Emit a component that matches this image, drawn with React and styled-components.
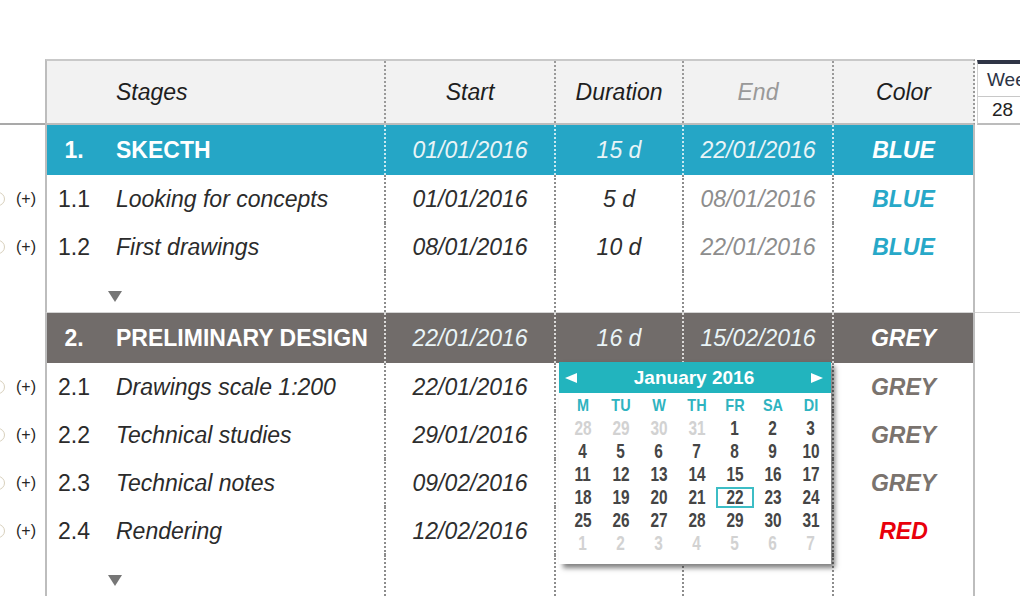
import React from "react";
import styled, { createGlobalStyle } from "styled-components";

const Global = createGlobalStyle`
  html, body { margin: 0; padding: 0; background: #fff; }
  body { font-family: "Liberation Sans", Arial, sans-serif; overflow: hidden; }
`;

const Page = styled.div`
  position: relative;
  width: 1020px;
  height: 596px;
  overflow: hidden;
  padding-top: 59px;
  box-sizing: border-box;
`;

const Row = styled.div`
  display: flex;
  height: ${(p) => p.$h}px;
`;

const Gutter = styled.div`
  width: 45px;
  flex: none;
  display: flex;
  align-items: center;
  gap: 11px;
  box-sizing: border-box;
  overflow: hidden;
  border-bottom: ${(p) => (p.$line ? "2px solid #a9a9a9" : "none")};
`;

const Ring = styled.span`
  width: 12px;
  height: 12px;
  margin-left: -9px;
  border-radius: 50%;
  border: 1px solid #d8d0bc;
  flex: none;
`;

const Plus = styled.span`
  font-size: 16px;
  color: #262626;
`;

const bgs = { head: "#f2f2f2", blue: "#25a6c6", grey: "#716c6a", task: "#fff", space: "#fff" };

const Main = styled.div`
  width: 930px;
  flex: none;
  box-sizing: border-box;
  display: grid;
  grid-template-columns: 54px 283px 170px 128px 150px 141px;
  background: ${(p) => bgs[p.$kind]};
  border-left: 2px solid #bdbdbd;
  border-right: 2px ${(p) => (p.$kind === "head" ? "dotted #9a9a9a" : "solid #bdbdbd")};
  border-top: ${(p) =>
    p.$kind === "head" ? "2px solid #c9c9c9" : p.$sep ? "1px solid #d4d4d4" : "none"};
  border-bottom: ${(p) => (p.$kind === "head" ? "2px solid #bcbcbc" : "none")};
`;

const Cell = styled.div`
  display: flex;
  align-items: center;
  justify-content: ${(p) => p.$justify || "center"};
  padding-left: ${(p) => p.$pad || 0}px;
  border-left: ${(p) => (p.$div ? `2px dotted ${p.$dot}` : "none")};
  font-size: 23px;
  font-style: ${(p) => (p.$italic ? "italic" : "normal")};
  font-weight: ${(p) => (p.$bold ? 700 : 400)};
  color: ${(p) => p.$color};
  white-space: nowrap;
  overflow: hidden;
`;

const SpaceCell = styled.div`
  padding: 20px 0 0 7px;
  border-left: ${(p) => (p.$div ? "2px dotted #8c8c8c" : "none")};
`;

const Caret = styled.div`
  width: 0;
  height: 0;
  border-left: 7px solid transparent;
  border-right: 7px solid transparent;
  border-top: 11px solid #767676;
`;

const Week = styled.div`
  flex: 1;
  background: #fff;
  border-top: ${(p) => (p.$sep ? "1px solid #d4d4d4" : "none")};
`;

const WeekHead = styled.div`
  flex: 1;
  margin-left: 2px;
  display: flex;
  flex-direction: column;
  border-top: 4px solid #2f3546;
  margin-top: 1px;
  border-left: 1px solid #d0d0d0;
  border-bottom: 2px solid #bcbcbc;
`;

const WeekLabel = styled.div`
  height: 32px;
  display: flex;
  align-items: center;
  padding-left: 9px;
  font-size: 19px;
  color: #2c3446;
  border-bottom: 1px solid #c8c8c8;
  white-space: nowrap;
`;

const WeekNum = styled.div`
  flex: 1;
  display: flex;
  align-items: center;
  padding-left: 14px;
  font-size: 19px;
  color: #222;
`;

/* date picker lying over the table */
const Picker = styled.div`
  position: absolute;
  left: 559px;
  top: 362px;
  width: 272px;
  height: 202px;
  background: #fff;
  box-shadow: 4px 4px 5px rgba(0, 0, 0, 0.5);
`;

const PickerHead = styled.div`
  height: 31px;
  background: #22b4be;
  display: flex;
  align-items: center;
  justify-content: space-between;
  padding: 0 8px 0 6px;
`;

const Arrow = styled.span`
  width: 0;
  height: 0;
  border-top: 5px solid transparent;
  border-bottom: 5px solid transparent;
  border-${(p) => (p.$dir === "left" ? "right" : "left")}: 12px solid #fff;
`;

const Title = styled.span`
  font-size: 19px;
  font-weight: 700;
  color: #fff;
`;

const DayGrid = styled.div`
  display: grid;
  grid-template-columns: repeat(7, 1fr);
  grid-auto-rows: 23px;
  padding: 1px 4px 0 5px;
`;

const Dow = styled.div`
  display: flex;
  align-items: center;
  justify-content: center;
  font-size: 17px;
  font-weight: 700;
  color: #2fb3c0;
  transform: scaleX(0.85);
`;

const Day = styled.div`
  display: flex;
  align-items: center;
  justify-content: center;
`;

const DayNum = styled.span`
  display: flex;
  align-items: center;
  justify-content: center;
  box-sizing: border-box;
  width: 38px;
  height: 21px;
  border: 2px solid ${(p) => (p.$sel ? "#3dbdc5" : "transparent")};
  font-size: 20px;
  font-weight: 700;
  color: ${(p) => (p.$muted ? "#d2d2d2" : "#454545")};
  & > span {
    display: inline-block;
    transform: scaleX(0.77);
  }
`;

const groups = [
  {
    num: "1.",
    name: "SKECTH",
    start: "01/01/2016",
    dur: "15 d",
    end: "22/01/2016",
    color: "BLUE",
    kind: "blue",
    tasks: [
      { num: "1.1", name: "Looking for concepts", start: "01/01/2016", dur: "5 d", end: "08/01/2016", color: "BLUE" },
      { num: "1.2", name: "First drawings", start: "08/01/2016", dur: "10 d", end: "22/01/2016", color: "BLUE" },
    ],
  },
  {
    num: "2.",
    name: "PRELIMINARY DESIGN",
    start: "22/01/2016",
    dur: "16 d",
    end: "15/02/2016",
    color: "GREY",
    kind: "grey",
    // duration / end of these rows sit under the open date picker
    tasks: [
      { num: "2.1", name: "Drawings scale 1:200", start: "22/01/2016", color: "GREY" },
      { num: "2.2", name: "Technical studies", start: "29/01/2016", color: "GREY" },
      { num: "2.3", name: "Technical notes", start: "09/02/2016", color: "GREY" },
      { num: "2.4", name: "Rendering", start: "12/02/2016", color: "RED" },
    ],
  },
];

const tagColors = { BLUE: "#27a8c8", GREY: "#7a736e", RED: "#e8000b" };

const weeks = [
  [28, 29, 30, 31, 1, 2, 3],
  [4, 5, 6, 7, 8, 9, 10],
  [11, 12, 13, 14, 15, 16, 17],
  [18, 19, 20, 21, 22, 23, 24],
  [25, 26, 27, 28, 29, 30, 31],
  [1, 2, 3, 4, 5, 6, 7],
];

function StageRow({ g, sep }) {
  const dot = "rgba(255,255,255,0.75)";
  return (
    <Row $h={sep ? 51 : 50}>
      <Gutter />
      <Main $kind={g.kind} $sep={sep}>
        <Cell $bold $color="#fff">{g.num}</Cell>
        <Cell $bold $justify="flex-start" $pad={15} $color="#fff">{g.name}</Cell>
        <Cell $div $dot={dot} $italic $color="#e9f4f7">{g.start}</Cell>
        <Cell $div $dot={dot} $italic $color="#e9f4f7">{g.dur}</Cell>
        <Cell $div $dot={dot} $italic $color="#e9f4f7">{g.end}</Cell>
        <Cell $div $dot={dot} $italic $bold $color="#fff">{g.color}</Cell>
      </Main>
      <Week $sep={sep} />
    </Row>
  );
}

function TaskRow({ t }) {
  const dot = "#8c8c8c";
  return (
    <Row $h={48}>
      <Gutter>
        <Ring />
        <Plus>(+)</Plus>
      </Gutter>
      <Main $kind="task">
        <Cell $color="#2b2b2b">{t.num}</Cell>
        <Cell $italic $justify="flex-start" $pad={15} $color="#2b2b2b">{t.name}</Cell>
        <Cell $div $dot={dot} $italic $color="#2e2e2e">{t.start}</Cell>
        <Cell $div $dot={dot} $italic $color="#2e2e2e">{t.dur}</Cell>
        <Cell $div $dot={dot} $italic $color="#8d8d8d">{t.end}</Cell>
        <Cell $div $dot={dot} $italic $bold $color={tagColors[t.color]}>{t.color}</Cell>
      </Main>
      <Week />
    </Row>
  );
}

function SpacerRow({ h }) {
  return (
    <Row $h={h}>
      <Gutter />
      <Main $kind="space">
        <SpaceCell />
        <SpaceCell>
          <Caret />
        </SpaceCell>
        <SpaceCell $div />
        <SpaceCell $div />
        <SpaceCell $div />
        <SpaceCell $div />
      </Main>
      <Week />
    </Row>
  );
}

export default function App() {
  const hd = "#9a9a9a";
  return (
    <Page>
      <Global />
      <Row $h={66}>
        <Gutter $line />
        <Main $kind="head">
          <Cell />
          <Cell $italic $justify="flex-start" $pad={15} $color="#1e1e1e">Stages</Cell>
          <Cell $div $dot={hd} $italic $color="#1e1e1e">Start</Cell>
          <Cell $div $dot={hd} $italic $color="#1e1e1e">Duration</Cell>
          <Cell $div $dot={hd} $italic $color="#999">End</Cell>
          <Cell $div $dot={hd} $italic $color="#1e1e1e">Color</Cell>
        </Main>
        <WeekHead>
          <WeekLabel>Week</WeekLabel>
          <WeekNum>28</WeekNum>
        </WeekHead>
      </Row>
      {groups.map((g, i) => (
        <React.Fragment key={g.num}>
          <StageRow g={g} sep={i > 0} />
          {g.tasks.map((t) => (
            <TaskRow key={t.num} t={t} />
          ))}
          <SpacerRow h={i === 0 ? 41 : 60} />
        </React.Fragment>
      ))}

      <Picker>
        <PickerHead>
          <Arrow $dir="left" />
          <Title>January 2016</Title>
          <Arrow $dir="right" />
        </PickerHead>
        <DayGrid>
          {["M", "TU", "W", "TH", "FR", "SA", "DI"].map((d) => (
            <Dow key={d}>{d}</Dow>
          ))}
          {weeks.map((w, wi) =>
            w.map((d, di) => {
              const muted = (wi === 0 && d > 20) || wi === 5;
              return (
                <Day key={`${wi}-${di}`}>
                  <DayNum $muted={muted} $sel={wi === 3 && d === 22}>
                    <span>{d}</span>
                  </DayNum>
                </Day>
              );
            })
          )}
        </DayGrid>
      </Picker>
    </Page>
  );
}
